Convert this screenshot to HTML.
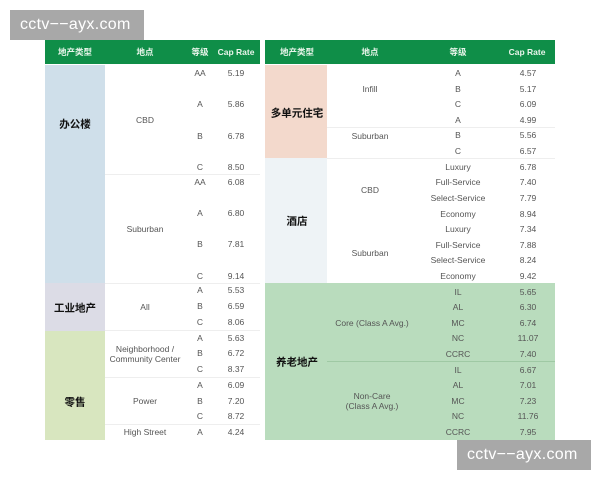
<html><head><style>
body{margin:0;width:600px;height:480px;background:#fff;position:relative;overflow:hidden;font-family:"Liberation Sans","Noto Sans CJK SC",sans-serif;}
div{position:absolute;}
.t{font-size:8.5px;color:#555;transform:translate(-50%,-50%);white-space:nowrap;text-align:center;line-height:10px}
.h{font-size:8.5px;color:#e8f5ea;font-weight:bold;transform:translate(-50%,-50%);white-space:nowrap}
.c{font-size:10.5px;color:#111;font-weight:bold;transform:translate(-50%,-50%);white-space:nowrap}
.l{height:1px;background:#eee}
.wm{background:#a8a8a8;color:#fff;font-size:16px;line-height:30px;padding:0 10px;letter-spacing:0.3px}
</style></head><body>
<div style="left:45px;top:40px;width:215px;height:24px;background:#0f8e48"></div>
<div style="left:265px;top:40px;width:290px;height:24px;background:#0f8e48"></div>
<div style="left:45px;top:65px;width:60px;height:218px;background:#cfdfea"></div>
<div style="left:45px;top:283px;width:60px;height:48px;background:#dcdce6"></div>
<div style="left:45px;top:331px;width:60px;height:109px;background:#d8e6bf"></div>
<div style="left:265px;top:65px;width:62px;height:93px;background:#f3d9cc"></div>
<div style="left:265px;top:158px;width:62px;height:125px;background:#eef3f6"></div>
<div style="left:265px;top:283px;width:290px;height:157px;background:#b9dcbd"></div>
<div class="l" style="left:105px;top:174px;width:155px"></div>
<div class="l" style="left:105px;top:283px;width:155px"></div>
<div class="l" style="left:105px;top:330px;width:155px"></div>
<div class="l" style="left:105px;top:377px;width:155px"></div>
<div class="l" style="left:105px;top:424px;width:155px"></div>
<div class="l" style="left:327px;top:127px;width:228px"></div>
<div class="l" style="left:327px;top:158px;width:228px"></div>
<div class="l" style="left:327px;top:361px;width:228px;background:#9fc9a4"></div>
<div class="h" style="left:75px;top:52px">地产类型</div>
<div class="h" style="left:145px;top:52px">地点</div>
<div class="h" style="left:200px;top:52px">等级</div>
<div class="h" style="left:236px;top:52px">Cap Rate</div>
<div class="h" style="left:297px;top:52px">地产类型</div>
<div class="h" style="left:370px;top:52px">地点</div>
<div class="h" style="left:458px;top:52px">等级</div>
<div class="h" style="left:527px;top:52px">Cap Rate</div>
<div class="c" style="left:75px;top:124px">办公楼</div>
<div class="c" style="left:75px;top:308px">工业地产</div>
<div class="c" style="left:75px;top:402px">零售</div>
<div class="c" style="left:297px;top:113px">多单元住宅</div>
<div class="c" style="left:297px;top:221px">酒店</div>
<div class="c" style="left:297px;top:362px">养老地产</div>
<div class="t" style="left:145px;top:120px">CBD</div>
<div class="t" style="left:145px;top:229px">Suburban</div>
<div class="t" style="left:145px;top:307px">All</div>
<div class="t" style="left:145px;top:354px">Neighborhood /<br>Community Center</div>
<div class="t" style="left:145px;top:401px">Power</div>
<div class="t" style="left:145px;top:432px">High Street</div>
<div class="t" style="left:370px;top:89px">Infill</div>
<div class="t" style="left:370px;top:136px">Suburban</div>
<div class="t" style="left:370px;top:190px">CBD</div>
<div class="t" style="left:370px;top:253px">Suburban</div>
<div class="t" style="left:372px;top:323px">Core (Class A Avg.)</div>
<div class="t" style="left:372px;top:401px">Non-Care<br>(Class A Avg.)</div>
<div class="t" style="left:200px;top:73px">AA</div><div class="t" style="left:236px;top:73px">5.19</div>
<div class="t" style="left:200px;top:104px">A</div><div class="t" style="left:236px;top:104px">5.86</div>
<div class="t" style="left:200px;top:136px">B</div><div class="t" style="left:236px;top:136px">6.78</div>
<div class="t" style="left:200px;top:167px">C</div><div class="t" style="left:236px;top:167px">8.50</div>
<div class="t" style="left:200px;top:182px">AA</div><div class="t" style="left:236px;top:182px">6.08</div>
<div class="t" style="left:200px;top:213px">A</div><div class="t" style="left:236px;top:213px">6.80</div>
<div class="t" style="left:200px;top:244px">B</div><div class="t" style="left:236px;top:244px">7.81</div>
<div class="t" style="left:200px;top:276px">C</div><div class="t" style="left:236px;top:276px">9.14</div>
<div class="t" style="left:200px;top:290px">A</div><div class="t" style="left:236px;top:290px">5.53</div>
<div class="t" style="left:200px;top:306px">B</div><div class="t" style="left:236px;top:306px">6.59</div>
<div class="t" style="left:200px;top:322px">C</div><div class="t" style="left:236px;top:322px">8.06</div>
<div class="t" style="left:200px;top:338px">A</div><div class="t" style="left:236px;top:338px">5.63</div>
<div class="t" style="left:200px;top:353px">B</div><div class="t" style="left:236px;top:353px">6.72</div>
<div class="t" style="left:200px;top:369px">C</div><div class="t" style="left:236px;top:369px">8.37</div>
<div class="t" style="left:200px;top:385px">A</div><div class="t" style="left:236px;top:385px">6.09</div>
<div class="t" style="left:200px;top:401px">B</div><div class="t" style="left:236px;top:401px">7.20</div>
<div class="t" style="left:200px;top:416px">C</div><div class="t" style="left:236px;top:416px">8.72</div>
<div class="t" style="left:200px;top:432px">A</div><div class="t" style="left:236px;top:432px">4.24</div>
<div class="t" style="left:458px;top:73px">A</div><div class="t" style="left:528px;top:73px">4.57</div>
<div class="t" style="left:458px;top:89px">B</div><div class="t" style="left:528px;top:89px">5.17</div>
<div class="t" style="left:458px;top:104px">C</div><div class="t" style="left:528px;top:104px">6.09</div>
<div class="t" style="left:458px;top:120px">A</div><div class="t" style="left:528px;top:120px">4.99</div>
<div class="t" style="left:458px;top:135px">B</div><div class="t" style="left:528px;top:135px">5.56</div>
<div class="t" style="left:458px;top:151px">C</div><div class="t" style="left:528px;top:151px">6.57</div>
<div class="t" style="left:458px;top:167px">Luxury</div><div class="t" style="left:528px;top:167px">6.78</div>
<div class="t" style="left:458px;top:182px">Full-Service</div><div class="t" style="left:528px;top:182px">7.40</div>
<div class="t" style="left:458px;top:198px">Select-Service</div><div class="t" style="left:528px;top:198px">7.79</div>
<div class="t" style="left:458px;top:214px">Economy</div><div class="t" style="left:528px;top:214px">8.94</div>
<div class="t" style="left:458px;top:229px">Luxury</div><div class="t" style="left:528px;top:229px">7.34</div>
<div class="t" style="left:458px;top:245px">Full-Service</div><div class="t" style="left:528px;top:245px">7.88</div>
<div class="t" style="left:458px;top:260px">Select-Service</div><div class="t" style="left:528px;top:260px">8.24</div>
<div class="t" style="left:458px;top:276px">Economy</div><div class="t" style="left:528px;top:276px">9.42</div>
<div class="t" style="left:458px;top:292px">IL</div><div class="t" style="left:528px;top:292px">5.65</div>
<div class="t" style="left:458px;top:307px">AL</div><div class="t" style="left:528px;top:307px">6.30</div>
<div class="t" style="left:458px;top:323px">MC</div><div class="t" style="left:528px;top:323px">6.74</div>
<div class="t" style="left:458px;top:338px">NC</div><div class="t" style="left:528px;top:338px">11.07</div>
<div class="t" style="left:458px;top:354px">CCRC</div><div class="t" style="left:528px;top:354px">7.40</div>
<div class="t" style="left:458px;top:370px">IL</div><div class="t" style="left:528px;top:370px">6.67</div>
<div class="t" style="left:458px;top:385px">AL</div><div class="t" style="left:528px;top:385px">7.01</div>
<div class="t" style="left:458px;top:401px">MC</div><div class="t" style="left:528px;top:401px">7.23</div>
<div class="t" style="left:458px;top:416px">NC</div><div class="t" style="left:528px;top:416px">11.76</div>
<div class="t" style="left:458px;top:432px">CCRC</div><div class="t" style="left:528px;top:432px">7.95</div>
<div class="wm" style="left:10px;top:10px;width:114px">cctv−−ayx.com</div>
<div class="wm" style="left:457px;top:440px;width:114px">cctv−−ayx.com</div>
</body></html>
